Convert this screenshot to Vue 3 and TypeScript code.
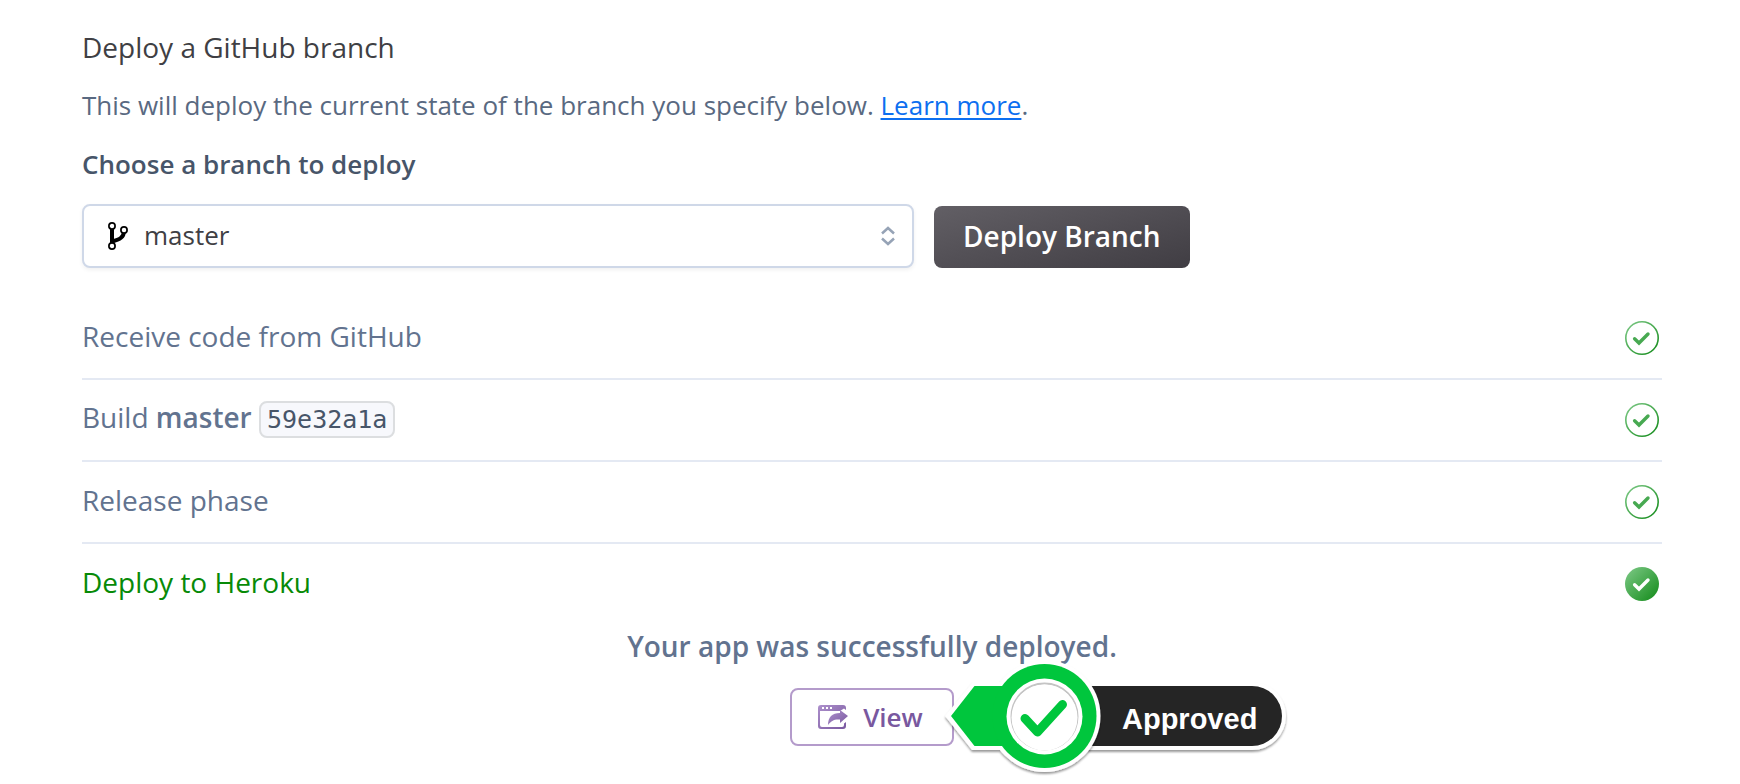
<script setup lang="ts">
import { ref } from 'vue'

interface Step {
  label: string
  branch?: string
  commit?: string
  current?: boolean
}

const branches: string[] = ['master']
const selected = ref('master')

const steps: Step[] = [
  { label: 'Receive code from GitHub' },
  { label: 'Build', branch: 'master', commit: '59e32a1a' },
  { label: 'Release phase' },
  { label: 'Deploy to Heroku', current: true },
]
</script>

<template>
  <main class="page">
    <h2 class="title">Deploy a GitHub branch</h2>
    <p class="intro">
      This will deploy the current state of the branch you specify below.
      <a href="#">Learn more</a>.
    </p>

    <form class="form" @submit.prevent>
      <label class="label" for="branch">Choose a branch to deploy</label>
      <div class="controls">
        <div class="picker">
          <select id="branch" v-model="selected">
            <option v-for="b in branches" :key="b" :value="b">{{ b }}</option>
          </select>
          <svg class="fork" viewBox="0 0 20 28" aria-hidden="true">
            <path d="M4 5V23M16 9C16 15 12 17.500 4 19.500" fill="none" stroke="#000" stroke-width="4" />
            <g fill="#fff" stroke="#000" stroke-width="1.700">
              <circle cx="4" cy="4" r="3.100" />
              <circle cx="16" cy="8" r="3.100" />
              <circle cx="4" cy="24" r="3.100" />
            </g>
          </svg>
          <svg class="updown" viewBox="0 0 14 20" aria-hidden="true">
            <path d="M1 7.500L7 2L13 7.500M1 12.500L7 18L13 12.500" fill="none" stroke="#96a3b6" stroke-width="2.500" />
          </svg>
        </div>
        <button class="deploy" type="submit">Deploy Branch</button>
      </div>
    </form>

    <ol class="steps">
      <li v-for="step in steps" :key="step.label" class="step" :class="{ current: step.current }">
        <span class="text">
          {{ step.label }}
          <template v-if="step.branch"><strong>{{ step.branch }}</strong>&nbsp;<code>{{ step.commit }}</code></template>
        </span>
        <svg class="status" viewBox="0 0 34 34" aria-hidden="true">
          <defs>
            <linearGradient id="green" x1="0" y1="0" x2="1" y2="1">
              <stop offset="0" stop-color="#7fca88" />
              <stop offset="1" stop-color="#118a18" />
            </linearGradient>
          </defs>
          <circle v-if="step.current" cx="17" cy="17" r="17" fill="url(#green)" />
          <circle v-else cx="17" cy="17" r="16.200" fill="none" stroke="url(#green)" stroke-width="1.600" />
          <path
            d="M9.600 17.700L14 22L23 13"
            fill="none"
            :stroke="step.current ? '#fff' : '#47a951'"
            stroke-width="3.400"
            stroke-linecap="round"
          />
        </svg>
      </li>
    </ol>

    <section class="result">
      <p class="message">Your app was successfully deployed.</p>
      <div class="action">
        <button class="view" type="button">
          <svg viewBox="0 0 30 24" aria-hidden="true">
            <defs>
              <linearGradient id="violet" x1="0" y1="0" x2="1" y2="1">
                <stop offset="0" stop-color="#ad90cc" />
                <stop offset="1" stop-color="#79589f" />
              </linearGradient>
            </defs>
            <path
              d="M3 0H25Q28 0 28 3V5L26 3.500L22 6H2V20Q2 22 4 22H24Q26 22 26 20V18.500L28 17V21Q28 24 25 24H3Q0 24 0 21V3Q0 0 3 0Z"
              fill="url(#violet)"
            />
            <path d="M4 2H6V4H4ZM8 2H10V4H8ZM12 2H14V4H12Z" fill="#fff" />
            <path d="M22 5L30 11L22 18V14.500C16 14 13 16 10 20C10 12 14 8 22 8Z" fill="url(#violet)" />
          </svg>
          View
        </button>
        <svg class="stamp" viewBox="0 0 360 129" role="img" aria-label="Approved">
          <defs>
            <filter id="drop" x="-10%" y="-20%" width="120%" height="140%">
              <feDropShadow dx="0" dy="2" stdDeviation="1" flood-color="#000" flood-opacity="0.400" />
            </filter>
          </defs>
          <g filter="url(#drop)">
            <path d="M100 27H312A34 34 0 0 1 312 95H100Z" fill="#fff" />
          </g>
          <path d="M100 31H312A30 30 0 0 1 312 91H100Z" fill="#252525" />
          <g filter="url(#drop)" fill="#fff">
            <path d="M33 27H100V95H32L5 61Z" />
            <circle cx="104.500" cy="61" r="56" />
          </g>
          <path d="M34.500 31H100V91H34.500L11 61Z" fill="#00c63d" />
          <circle cx="104.500" cy="61" r="52" fill="#00c63d" />
          <circle cx="104.500" cy="61.500" r="38" fill="#fff" />
          <circle class="ring" cx="104.500" cy="61.500" r="33" />
          <circle cx="104.500" cy="62.500" r="33" fill="#fff" />
          <path class="tick" d="M85 63.500L97.500 77L122.500 49.500" />
          <text x="182" y="74">Approved</text>
        </svg>
      </div>
    </section>
  </main>
</template>

<style>
body {
  margin: 0;
  background: #fff;
}
</style>

<style scoped>
.page {
  padding: 27px 78px 38px 82px;
  font-family: 'Open Sans', 'Noto Sans', sans-serif;
  font-size: 28px;
  line-height: 40px;
  color: #62738f;
}

.title {
  margin: 0;
  font-size: 28px;
  font-weight: 400;
  color: #3f3f44;
}

.intro {
  margin: 18px 0 0;
  font-size: 26px;
  color: #596981;
}

.intro a {
  color: #0d6ff0;
  text-decoration-thickness: 2px;
  text-underline-offset: 3px;
}

.form {
  margin-top: 19px;
}

.label {
  display: block;
  font-size: 26px;
  font-weight: 600;
  color: #475569;
}

.controls {
  display: flex;
  align-items: flex-end;
  gap: 20px;
  margin-top: 20px;
}

.picker {
  position: relative;
  flex: 0 1 832px;
}

.picker select {
  display: block;
  box-sizing: border-box;
  width: 100%;
  height: 64px;
  padding: 0 60px 2px;
  border: 2px solid #cfd8e8;
  border-radius: 8px;
  background: #fff;
  box-shadow: 0 2px 4px rgba(0, 0, 0, 0.06);
  appearance: none;
  font: inherit;
  font-size: 26px;
  color: #3f3f44;
}

.fork,
.updown {
  position: absolute;
  top: 0;
  bottom: 0;
  margin: auto 0;
  pointer-events: none;
}

.fork {
  left: 26px;
  width: 20px;
  height: 28px;
}

.updown {
  right: 19px;
  width: 14px;
  height: 20px;
}

.deploy {
  height: 62px;
  padding: 0 29px 2px;
  border: 0;
  border-radius: 8px;
  background: linear-gradient(165deg, #625f65, #403d43);
  font: inherit;
  font-weight: 600;
  color: #fff;
  white-space: nowrap;
}

.steps {
  margin: 30px 0 0;
  padding: 0;
  list-style: none;
}

.step {
  display: flex;
  align-items: center;
  justify-content: space-between;
  height: 80px;
  padding-right: 3px;
  border-bottom: 2px solid #e4e9f3;
}

.step.current {
  border-bottom: 0;
  color: #078a07;
}

.text {
  padding-bottom: 4px;
}

.step strong {
  font-weight: 600;
}

.step code {
  padding: 2px 6px;
  border: 2px solid #dcdee0;
  border-radius: 8px;
  background: #f7f8fc;
  font-family: 'DejaVu Sans Mono', monospace;
  font-size: 25px;
  color: #475569;
}

.status {
  flex: none;
  width: 34px;
  height: 34px;
}

.result {
  display: flex;
  flex-direction: column;
  align-items: center;
}

.message {
  margin: 2px 0 0;
  font-weight: 600;
}

.action {
  position: relative;
  margin-top: 22px;
}

.view {
  display: flex;
  align-items: center;
  gap: 15px;
  height: 58px;
  padding: 0 29px 0 26px;
  border: 2px solid #b49bcb;
  border-radius: 8px;
  background: #fff;
  font: inherit;
  font-size: 26px;
  font-weight: 600;
  color: #79589f;
}

.view svg {
  width: 30px;
  height: 24px;
}

.stamp {
  position: absolute;
  left: 150px;
  top: -33px;
  width: 360px;
  height: 129px;
}

.stamp text {
  fill: #fff;
  font-family: 'Liberation Sans', Arial, sans-serif;
  font-size: 29px;
  font-weight: 700;
}

.ring {
  fill: none;
  stroke: #c4c4c4;
  stroke-width: 2;
}

.tick {
  fill: none;
  stroke: #00c63d;
  stroke-width: 9;
  stroke-linecap: round;
  stroke-linejoin: round;
}
</style>
